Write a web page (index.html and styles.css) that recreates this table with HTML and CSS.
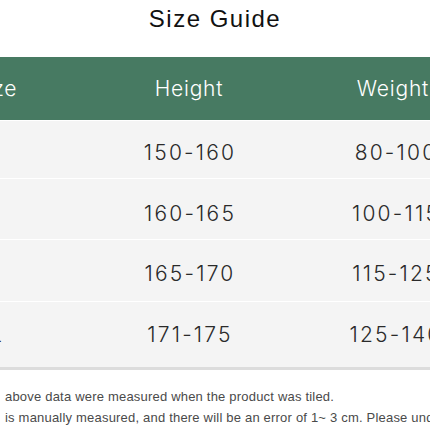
FILE: index.html
```html
<!DOCTYPE html>
<html lang="en">
<head>
<meta charset="utf-8">
<title>Size Guide</title>
<link rel="stylesheet" href="styles.css">
</head>
<body>
  <div class="page">
    <h1 class="title">Size Guide</h1>
    <div class="table">
      <div class="row head">
        <div class="cell">Size</div>
        <div class="cell">Height</div>
        <div class="cell">Weight</div>
      </div>
      <div class="row r1">
        <div class="cell size">S</div>
        <div class="cell">150-160</div>
        <div class="cell">80-100</div>
      </div>
      <div class="row r2">
        <div class="cell size">M</div>
        <div class="cell">160-165</div>
        <div class="cell">100-115</div>
      </div>
      <div class="row r3">
        <div class="cell size">L</div>
        <div class="cell">165-170</div>
        <div class="cell">115-125</div>
      </div>
      <div class="row r4">
        <div class="cell size">XL</div>
        <div class="cell">171-175</div>
        <div class="cell">125-140</div>
      </div>
    </div>
    <div class="notes">
      <p class="note">above data were measured when the product was tiled.</p>
      <p class="note">is manually measured, and there will be an error of 1~ 3 cm. Please understand.</p>
    </div>
  </div>
</body>
</html>
```

FILE: styles.css
```css
html, body {
  margin: 0;
  padding: 0;
  background: #ffffff;
  overflow: hidden;
}

.page {
  width: 430px;
  height: 430px;
  overflow: hidden;
  font-family: "Liberation Sans", Arial, sans-serif;
}

.title {
  margin: 0;
  height: 57px;
  line-height: 38px;
  text-align: center;
  font-size: 24px;
  font-weight: normal;
  letter-spacing: 1.5px;
  color: #111111;
}

.table {
  margin-left: -100px;
  width: 598px;
  display: flex;
  flex-direction: column;
  gap: 1px;
  background: #ffffff;
  border-bottom: 3px solid #dcdcdc;
  font-family: "Inter", "Liberation Sans", sans-serif;
  font-weight: 300;
}

.row {
  display: grid;
  grid-template-columns: 190px 198px 210px;
  align-items: center;
  background: #f4f4f4;
  color: #2a2a2a;
  font-size: 21px;
  letter-spacing: 2.2px;
}

.cell {
  text-align: center;
}

.num-shift {
  padding-left: 4px;
}

.size {
  padding-right: 12px;
}

.head {
  height: 63px;
  background: #477a62;
  color: #ffffff;
  letter-spacing: 0.8px;
}

.r1, .r2, .r3 {
  grid-template-columns: 190px 200px 212px;
}

.r1 { height: 57px; padding-top: 6px; box-sizing: border-box; }
.r2 { height: 60px; padding-top: 8px; box-sizing: border-box; }
.r3 { height: 61px; padding-top: 6px; box-sizing: border-box; }
.r4 { height: 65px; grid-template-columns: 190px 200px 212px; }

.notes {
  padding: 16px 0 0 5px;
  white-space: nowrap;
}

.note {
  margin: 0;
  font-size: 13px;
  line-height: 21px;
  letter-spacing: 0.2px;
  color: #4a4a4a;
}
```
